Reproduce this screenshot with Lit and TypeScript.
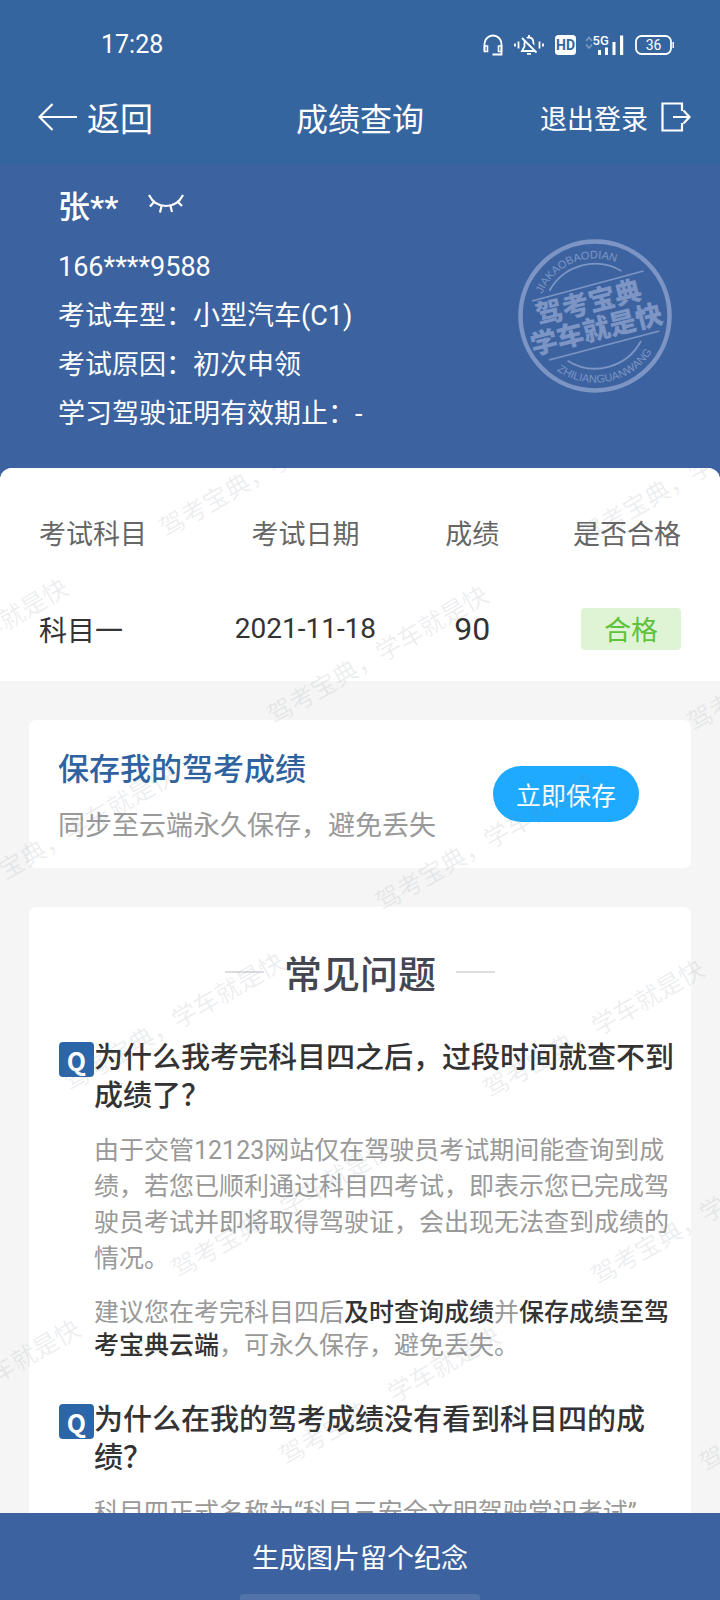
import { LitElement, html, css, svg } from "lit";
import { customElement, state } from "lit/decorators.js";

const WATERMARK = "驾考宝典，学车就是快";

interface Mark {
  x: number;
  y: number;
}

/* Lattice of watermark anchors, relative to the top left of the sheet. */
const marks: Mark[] = [];
for (let row = 0; row < 6; row++) {
  for (let col = -3; col < 3; col++) {
    const x = 166 + row * 108 + col * 420;
    const y = 70 + row * 187 + col * 7;
    if (x > -200 && x < 1200) marks.push({ x, y });
  }
}

@customElement("status-icons")
class StatusIcons extends LitElement {
  static styles = css`
    :host {
      display: flex;
      align-items: center;
      color: #fff;
    }
    svg {
      display: block;
      fill: none;
      stroke: currentColor;
    }
    .bell {
      margin-left: 11px;
    }
    .hd {
      margin-left: 11px;
    }
    .signal {
      margin-left: 9px;
    }
    .battery {
      margin-left: 10px;
    }
    .solid {
      fill: currentColor;
      stroke: none;
    }
    .faint {
      opacity: 0.35;
    }
    .cut {
      stroke: #35659f;
    }
    text {
      stroke: none;
      fill: currentColor;
      font-family: Roboto, "Liberation Sans", sans-serif;
    }
    .hd-text {
      fill: #35659f;
      font-size: 14px;
      font-weight: 700;
    }
    .net {
      font-size: 13px;
      font-weight: 500;
    }
    .level {
      font-size: 14px;
    }
  `;

  render() {
    return html`
      <svg width="20" height="22" viewBox="0 0 20 22" stroke-width="1.800" aria-label="耳机">
        <path d="M1.500 17V10a8.500 8.500 0 0 1 17 0v7" />
        <path d="M1.500 12h3v5.500h-3z M15.500 12h3v5.500h-3z" stroke-width="1.600" />
        <path d="M18.500 17v3.500h-9" />
      </svg>
      <svg class="bell" width="30" height="22" viewBox="0 0 30 22" stroke-width="1.800" aria-label="静音">
        <path d="M1 9.500v3M4.500 7.500v7M25.500 7.500v7M29 9.500v3" />
        <path d="M10.500 9.500c0-4 2-6 4.500-6s4.500 2 4.500 6v3l2.500 4.500H8l2.500-4.500z" />
        <path d="M15 1v2.500M13 19.800h4" />
        <path class="cut" d="M9.500 3.500L24 18" stroke-width="4" />
        <path d="M8 4l14.500 14.500" />
      </svg>
      <svg class="hd" width="21" height="20" viewBox="0 0 21 20" aria-label="HD">
        <rect class="solid" width="21" height="20" rx="3.500" />
        <text class="hd-text" x="10.500" y="15" text-anchor="middle">HD</text>
      </svg>
      <svg class="signal" width="40" height="22" viewBox="0 0 40 22" aria-label="5G">
        <path class="faint" d="M1 7l3-3.500L7 7M1 10.500L4 14l3-3.500" stroke-width="1.600" />
        <text class="net" x="7.500" y="10.500">5G</text>
        <path class="solid" d="M13 16h3v5h-3z M20 13.500h3V21h-3z M27.500 8h3v13h-3z M35 1.500h3.200V21H35z" />
      </svg>
      <svg class="battery" width="40" height="20" viewBox="0 0 40 20" aria-label="电量 36">
        <rect x="1" y="1" width="35" height="18" rx="5.500" stroke-width="1.800" />
        <path class="solid" d="M37.500 7H39v6h-1.500z" />
        <text class="level" x="18.500" y="15" text-anchor="middle">36</text>
      </svg>
    `;
  }
}

@customElement("brand-stamp")
class BrandStamp extends LitElement {
  static styles = css`
    :host {
      display: block;
      color: #7c95c5;
    }
    svg {
      display: block;
      fill: none;
      stroke: currentColor;
    }
    text {
      stroke: none;
      fill: currentColor;
    }
    .latin {
      font: 11px "Liberation Sans", sans-serif;
    }
    .slogan {
      font: 900 27px "Noto Sans CJK SC", sans-serif;
    }
  `;

  render() {
    return html`
      <svg width="160" height="160" viewBox="0 0 160 160" role="img" aria-label="驾考宝典 学车就是快">
        <defs>
          <path id="top" d="M27 58A58 58 0 0 1 121 39" />
          <path id="bottom" d="M42 134.500A67 67 0 0 0 145 98" />
        </defs>
        <circle cx="80" cy="80" r="74.500" stroke-width="4.500" />
        <path d="M34.500 54.700A52 52 0 0 1 106.500 35" stroke-width="1.800" />
        <path d="M52.500 124.700A52 52 0 0 0 126 105" stroke-width="1.800" />
        <path d="M17 65L128.500 35M34 124L144.500 95" stroke-width="1.800" />
        <text class="latin"><textPath href="#top">JIAKAOBAODIAN</textPath></text>
        <text class="latin"><textPath href="#bottom">ZHILIANGUANWANG</textPath></text>
        <g transform="rotate(-14 80 80)">
          <text class="slogan" x="77" y="75" text-anchor="middle">驾考宝典</text>
          <text class="slogan" x="78" y="103" text-anchor="middle">学车就是快</text>
        </g>
      </svg>
    `;
  }
}

@customElement("app-root")
class AppRoot extends LitElement {
  @state() private facts = ["166****9588", "考试车型：小型汽车(C1)", "考试原因：初次申领", "学习驾驶证明有效期止：-"];

  static styles = css`
    :host {
      display: flex;
      flex-direction: column;
      height: 100vh;
      background: #3c63a0;
      color: #fff;
      font-family: Roboto, "Noto Sans CJK SC", sans-serif;
      font-size: 27px;
    }
    * {
      box-sizing: border-box;
    }
    h1,
    h2,
    h3,
    p,
    ul {
      margin: 0;
      padding: 0;
      font-weight: 400;
    }
    button {
      border: 0;
      padding: 0;
      background: none;
      color: inherit;
      font: inherit;
      cursor: pointer;
    }
    .top {
      background: #35659f;
    }
    .status {
      display: flex;
      justify-content: space-between;
      align-items: center;
      padding: 29px 45px 9px 101px;
      font-size: 25px;
      line-height: 32px;
    }
    .nav {
      display: grid;
      grid-template-columns: 1fr auto 1fr;
      align-items: center;
      height: 94px;
      padding: 0 29px;
    }
    .nav button {
      display: flex;
      align-items: center;
    }
    .back {
      gap: 10px;
      padding-left: 9px;
      font-size: 33px;
    }
    .nav .back {
      padding-left: 9px;
    }
    .title {
      font-size: 32px;
    }
    .exit {
      gap: 13px;
      justify-self: end;
    }
    .line-icon {
      display: block;
      fill: none;
      stroke: currentColor;
      stroke-width: 2.2;
    }
    .profile {
      display: flex;
      justify-content: space-between;
      padding: 22px 45px 29px 58px;
    }
    .name-row {
      display: flex;
      align-items: center;
      gap: 30px;
      height: 36px;
      margin-bottom: 21px;
    }
    .name {
      font-size: 32px;
      font-weight: 500;
    }
    .facts {
      list-style: none;
      line-height: 49px;
    }
    .stamp {
      margin-top: 50px;
    }
    .sheet {
      position: relative;
      flex: 1;
      min-height: 0;
      overflow: hidden;
      border-radius: 12px 12px 0 0;
      background: #f5f5f5;
      color: #333;
    }
    .scroll {
      height: 100%;
      overflow-y: auto;
      scrollbar-width: none;
    }
    .watermark {
      position: absolute;
      inset: 0;
      width: 100%;
      height: 100%;
      pointer-events: none;
      fill: rgba(110, 118, 130, 0.12);
      font: 400 25px "Noto Sans CJK SC", sans-serif;
    }
    .scores {
      padding: 0 39px 24px;
      background: #fff;
    }
    table {
      width: 100%;
      table-layout: fixed;
      border-collapse: collapse;
    }
    th,
    td {
      padding: 0;
      text-align: center;
      white-space: nowrap;
    }
    th {
      height: 129px;
      color: #666;
      font-weight: 400;
    }
    td {
      height: 60px;
      padding-top: 3px;
      font-size: 28px;
    }
    th:first-child,
    td:first-child {
      width: 28%;
      text-align: left;
    }
    th:nth-child(2) {
      width: 27%;
    }
    th:nth-child(3) {
      width: 25%;
    }
    th:last-child,
    td:last-child {
      text-align: right;
    }
    td.score {
      font-size: 32px;
    }
    .pass {
      display: inline-block;
      width: 100px;
      border-radius: 4px;
      background: #dff4d5;
      color: #5ec33b;
      font-family: "Noto Sans CJK SC", sans-serif;
      font-size: 27px;
      line-height: 42px;
      text-align: center;
      vertical-align: middle;
    }
    .card {
      margin: 39px 29px 0;
      border-radius: 7px;
      background: #fff;
    }
    .save {
      display: flex;
      justify-content: space-between;
      align-items: center;
      padding: 30px 52px 22px 29px;
    }
    .save-text {
      display: grid;
      gap: 16px;
      line-height: 40px;
    }
    .save-title {
      color: #2f639f;
      font-size: 31px;
      font-weight: 500;
    }
    .muted {
      color: #999;
    }
    .save .save-button {
      width: 146px;
      height: 56px;
      margin-bottom: 8px;
      border-radius: 28px;
      background: #1eabff;
      color: #fff;
      font-size: 25px;
    }
    .faq {
      padding: 37px 15px 40px 30px;
    }
    .faq-title {
      display: flex;
      justify-content: center;
      align-items: center;
      gap: 20px;
      padding-right: 15px;
      color: #444752;
      font-family: "Noto Sans CJK SC", sans-serif;
      font-size: 38px;
      font-weight: 500;
      line-height: 56px;
    }
    .faq-title::before,
    .faq-title::after {
      content: "";
      width: 39px;
      height: 2px;
      background: #dcdde0;
    }
    .item {
      display: grid;
      grid-template-columns: 35px 1fr;
      margin-top: 39px;
    }
    .badge {
      height: 35px;
      margin-top: 3px;
      border-radius: 4px;
      background: #2c66a9;
      color: #fff;
      font-family: "Noto Sans CJK SC", sans-serif;
      font-size: 25px;
      font-weight: 700;
      line-height: 37px;
      text-align: center;
    }
    .question {
      font-size: 29px;
      font-weight: 500;
      line-height: 38px;
    }
    .answer {
      grid-column: 2;
      margin-top: 18px;
      color: #999;
      font-size: 25px;
      line-height: 36px;
    }
    .advice {
      margin-top: 19px;
      line-height: 33px;
    }
    .advice b {
      color: #333;
      font-weight: 500;
    }
    .footer {
      display: grid;
      grid-template-rows: 1fr 6px;
      justify-items: center;
      height: 87px;
    }
    .footer button {
      width: 100%;
      padding-top: 6px;
    }
    .home {
      width: 240px;
      border-radius: 4px 4px 0 0;
      background: #5273aa;
    }
  `;

  render() {
    return html`
      <header class="top">
        <div class="status">
          <span>17:28</span>
          <status-icons></status-icons>
        </div>
        <nav class="nav">
          <button class="back">
            <svg class="line-icon" width="39" height="28" viewBox="0 0 39 28">
              <path d="M39 14H1.500M14.500 1L1.500 14l13 13" />
            </svg>
            返回
          </button>
          <h1 class="title">成绩查询</h1>
          <button class="exit">
            退出登录
            <svg class="line-icon" width="30" height="30" viewBox="0 0 30 30">
              <path d="M21 9V1.500H1.500v27H21V21M12 15h16M22.500 8.500L28.500 15l-6 6.500" />
            </svg>
          </button>
        </nav>
      </header>

      <section class="profile">
        <div>
          <div class="name-row">
            <span class="name">张**</span>
            <button aria-label="显示姓名">
              <svg class="line-icon" width="36" height="20" viewBox="0 0 36 20">
                <path d="M1 1c3.500 7 9.500 11 17 11S31.500 8 35 1M6 8l-4 4.500M13.500 12L12 18.500M22.500 12l1.500 6M30 8l4 4" />
              </svg>
            </button>
          </div>
          <ul class="facts">
            ${this.facts.map((f) => html`<li>${f}</li>`)}
          </ul>
        </div>
        <brand-stamp class="stamp"></brand-stamp>
      </section>

      <main class="sheet">
        <div class="scroll">
          <section class="scores">
            <table>
              <thead>
                <tr>
                  <th scope="col">考试科目</th>
                  <th scope="col">考试日期</th>
                  <th scope="col">成绩</th>
                  <th scope="col">是否合格</th>
                </tr>
              </thead>
              <tbody>
                <tr>
                  <td>科目一</td>
                  <td>2021-11-18</td>
                  <td class="score">90</td>
                  <td><span class="pass">合格</span></td>
                </tr>
              </tbody>
            </table>
          </section>

          <section class="card save">
            <div class="save-text">
              <h2 class="save-title">保存我的驾考成绩</h2>
              <p class="muted">同步至云端永久保存，避免丢失</p>
            </div>
            <button class="save-button">立即保存</button>
          </section>

          <section class="card faq">
            <h2 class="faq-title">常见问题</h2>
            <article class="item">
              <span class="badge">Q</span>
              <h3 class="question">为什么我考完科目四之后，过段时间就查不到成绩了？</h3>
              <p class="answer">
                由于交管12123网站仅在驾驶员考试期间能查询到成绩，若您已顺利通过科目四考试，即表示您已完成驾驶员考试并即将取得驾驶证，会出现无法查到成绩的情况。
              </p>
              <p class="answer advice">建议您在考完科目四后<b>及时查询成绩</b>并<b>保存成绩至驾考宝典云端</b>，可永久保存，避免丢失。</p>
            </article>
            <article class="item">
              <span class="badge">Q</span>
              <h3 class="question">为什么在我的驾考成绩没有看到科目四的成绩？</h3>
              <p class="answer">科目四正式名称为“科目三安全文明驾驶常识考试”</p>
            </article>
          </section>
        </div>
        <svg class="watermark" aria-hidden="true">
          ${marks.map((m) => svg`<text transform="translate(${m.x} ${m.y}) rotate(-30)">${WATERMARK}</text>`)}
        </svg>
      </main>

      <footer class="footer">
        <button>生成图片留个纪念</button>
        <span class="home"></span>
      </footer>
    `;
  }
}
